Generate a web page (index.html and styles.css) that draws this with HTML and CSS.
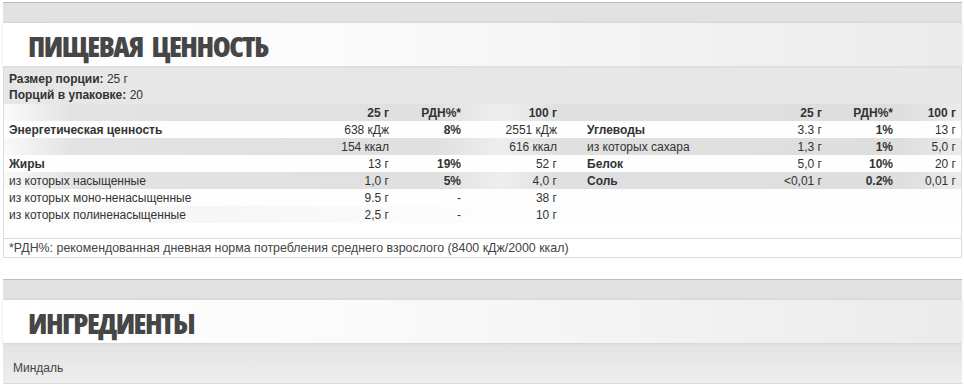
FILE: index.html
```html
<!DOCTYPE html>
<html lang="ru">
<head>
<meta charset="utf-8">
<title>Пищевая ценность</title>
<link rel="stylesheet" href="styles.css">
</head>
<body>
<section class="panel">
  <div class="panel-bar"></div>
  <h2 class="panel-title">ПИЩЕВАЯ ЦЕННОСТЬ</h2>
  <div class="panel-body">
    <div class="serving">
      <div><b>Размер порции:</b> 25 г</div>
      <div><b>Порций в упаковке:</b> 20</div>
    </div>
    <div class="nt">
      <div class="row grey head">
        <span></span><span class="num">25 г</span><span class="num">РДН%*</span><span class="num">100 г</span>
        <span></span><span class="num">25 г</span><span class="num">РДН%*</span><span class="num">100 г</span>
      </div>
      <div class="row">
        <span class="lbl b">Энергетическая ценность</span><span class="num">638 кДж</span><span class="num b">8%</span><span class="num">2551 кДж</span>
        <span class="lbl2 b">Углеводы</span><span class="num">3.3 г</span><span class="num b">1%</span><span class="num">13 г</span>
      </div>
      <div class="row grey">
        <span class="lbl"></span><span class="num">154 ккал</span><span class="num"></span><span class="num">616 ккал</span>
        <span class="lbl2">из которых сахара</span><span class="num">1,3 г</span><span class="num b">1%</span><span class="num">5,0 г</span>
      </div>
      <div class="row">
        <span class="lbl b">Жиры</span><span class="num">13 г</span><span class="num b">19%</span><span class="num">52 г</span>
        <span class="lbl2 b">Белок</span><span class="num">5,0 г</span><span class="num b">10%</span><span class="num">20 г</span>
      </div>
      <div class="row grey">
        <span class="lbl">из которых насыщенные</span><span class="num">1,0 г</span><span class="num b">5%</span><span class="num">4,0 г</span>
        <span class="lbl2 b">Соль</span><span class="num">&lt;0,01 г</span><span class="num b">0.2%</span><span class="num">0,01 г</span>
      </div>
      <div class="row">
        <span class="lbl">из которых моно-ненасыщенные</span><span class="num">9.5 г</span><span class="num">-</span><span class="num">38 г</span>
        <span></span><span></span><span></span><span></span>
      </div>
      <div class="row faint">
        <span class="lbl">из которых полиненасыщенные</span><span class="num">2,5 г</span><span class="num">-</span><span class="num">10 г</span>
        <span></span><span></span><span></span><span></span>
      </div>
    </div>
    <div class="footnote">*РДН%: рекомендованная дневная норма потребления среднего взрослого (8400 кДж/2000 ккал)</div>
  </div>
</section>

<section class="panel second">
  <div class="panel-bar"></div>
  <h2 class="panel-title">ИНГРЕДИЕНТЫ</h2>
  <div class="ingredients">Миндаль</div>
</section>
</body>
</html>
```

FILE: styles.css
```css
html, body {
  margin: 0;
  padding: 0;
  background: #fff;
}
body {
  padding: 2px 2px 0 3px;
  font-family: "Liberation Sans", Arial, sans-serif;
  font-size: 12px;
  color: #333;
}
.panel {
  border-top: 1px solid #bcbcbc;
}
.panel.second {
  margin-top: 21px;
}
.panel-bar {
  height: 20px;
  background: #e2e2e2;
}
.panel-title {
  margin: 0;
  height: 43px;
  line-height: 45px;
  padding-left: 25px;
  background: linear-gradient(to right, #ffffff 0%, #fbfbfb 35%, #ebebeb 100%);
  box-shadow: 0 0 3px rgba(0, 0, 0, 0.12);
  position: relative;
  font-family: "Open Sans", "DejaVu Sans Condensed", sans-serif;
  font-stretch: 75%;
  font-weight: 800;
  font-size: 29px;
  color: #464646;
  letter-spacing: -1.5px;
  word-spacing: 5px;
}
.panel-body {
  border-left: 1px solid #dcdcdc;
  border-right: 1px solid #dcdcdc;
  border-bottom: 1px solid #dcdcdc;
  background: #fff;
}
.serving {
  background: #e7e7e7;
  padding: 5px 5px 1px;
  line-height: 16px;
}
.serving b { font-weight: bold; }
.nt {
  padding-bottom: 15px;
}
.row {
  display: grid;
  grid-template-columns: 316px 74px 72px 96px 178px 87px 71px 63px;
  height: 17px;
  line-height: 18px;
  background: #fefefe;
}
.row.grey {
  background: linear-gradient(to right, #fafafa 0%, #e3e3e3 7%, #e0e0e0 45%, #eeeeee 52%, #e0e0e0 58%, #dedede 94%, #ececec 100%);
}
.row.faint {
  background: linear-gradient(to right, #fdfdfd 0%, #f6f6f6 20%, #fdfdfd 50%);
}
.row.head { font-weight: bold; }
.row span { white-space: nowrap; overflow: hidden; }
.lbl { padding-left: 5px; }
.lbl2 { padding-left: 25px; }
.num { text-align: right; padding-right: 5px; }
.b { font-weight: bold; }
.footnote {
  border-top: 1px solid #dcdcdc;
  height: 18px;
  line-height: 19px;
  padding-left: 5px;
  font-size: 12.4px;
  color: #444;
}
.ingredients {
  height: 40px;
  line-height: 50px;
  padding-left: 10px;
  background: linear-gradient(to bottom, #e3e3e3 0%, #eeeeee 100%);
  border-bottom: 1px solid #d8d8d8;
  color: #444;
}
```
